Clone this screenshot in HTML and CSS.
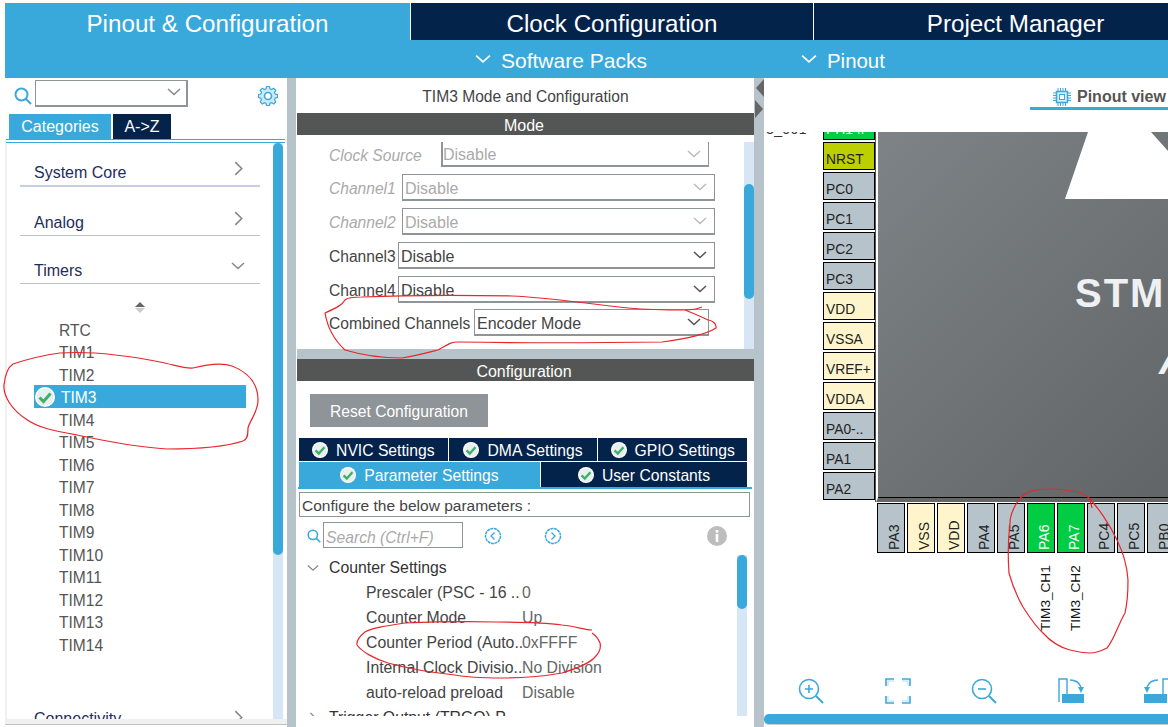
FILE: index.html
```html
<!DOCTYPE html>
<html lang="en">
<head>
  <meta charset="UTF-8" />
  <meta name="viewport" content="width=device-width,initial-scale=1.0" />
  <title>Pinout &amp; Configuration</title>
  <link rel="stylesheet" href="styles.css">
</head>
<body>
  <svg width="0" height="0" class="defs">
    <symbol id="ok" viewBox="0 0 20 20">
      <circle cx="10" cy="10" r="10" fill="#fff"/>
      <circle cx="10" cy="10" r="8.5" fill="#e8efec"/>
      <path d="M4.5 10.5l4 4 7-8" fill="none" stroke="#3fae6e" stroke-width="3"/>
    </symbol>
    <symbol id="down" viewBox="0 0 14 8">
      <path d="M1 1l6 5.5L13 1" fill="none" stroke="currentColor" stroke-width="1.5"/>
    </symbol>
    <symbol id="right" viewBox="0 0 8 14">
      <path d="M1 1l6 6-6 6" fill="none" stroke="currentColor" stroke-width="1.5"/>
    </symbol>
    <symbol id="glass" viewBox="0 0 18 18">
      <circle cx="7.5" cy="7.5" r="6" fill="none" stroke="#3aa8db" stroke-width="2"/>
      <path d="M12 12l5 5" stroke="#3aa8db" stroke-width="2"/>
    </symbol>
  </svg>

  <div class="app">
    <header>
      <nav class="main-tabs">
        <div class="main-tab tab-pinout active">Pinout &amp; Configuration</div>
        <div class="main-tab tab-clock">Clock Configuration</div>
        <div class="main-tab tab-project">Project Manager</div>
      </nav>
      <div class="sub-bar">
        <div class="sub-item sub-packs"><svg class="sub-chev"><use href="#down"/></svg>Software Packs</div>
        <div class="sub-item"><svg class="sub-chev"><use href="#down"/></svg>Pinout</div>
      </div>
    </header>

    <div class="workspace">
      <aside class="left-pane">
        <div class="left-tools">
          <svg class="left-glass"><use href="#glass"/></svg>
          <div class="left-combo"><svg class="combo-chev"><use href="#down"/></svg></div>
          <svg class="gear" viewBox="0 0 20 20">
            <path d="M8.5 1h3l.5 2.4 1.6.7 2.1-1.3 2.1 2.1-1.3 2.1.7 1.6 2.3.5v3l-2.3.5-.7 1.6 1.3 2.1-2.1 2.1-2.1-1.3-1.6.7-.5 2.2h-3L8 17.9l-1.6-.7-2.1 1.3-2.1-2.1 1.3-2.1-.7-1.6L.5 12V9l2.3-.5.7-1.6-1.3-2.1 2.1-2.1 2.1 1.3L8 3.3z" fill="#cfe8f6" stroke="#3aa8db" stroke-width="1.2"/>
            <circle cx="10" cy="10.5" r="3.5" fill="#fff" stroke="#3aa8db" stroke-width="1.6"/>
          </svg>
        </div>
        <div class="left-tabs">
          <div class="left-tab left-tab-on">Categories</div>
          <div class="left-tab left-tab-off">A-&gt;Z</div>
        </div>
        <div class="left-rule"></div>
        <div class="left-body">
          <div class="tree">
            <div class="section section-first">System Core<svg class="sec-right"><use href="#right"/></svg></div>
            <div class="section">Analog<svg class="sec-right"><use href="#right"/></svg></div>
            <div class="section">Timers<svg class="sec-down"><use href="#down"/></svg></div>
            <div class="sorter"><span class="sort-up"></span><span class="sort-down"></span></div>
            <ul class="peripherals">
              <li>RTC</li>
              <li>TIM1</li>
              <li>TIM2</li>
              <li class="picked"><svg class="picked-ok"><use href="#ok"/></svg>TIM3</li>
              <li>TIM4</li>
              <li>TIM5</li>
              <li>TIM6</li>
              <li>TIM7</li>
              <li>TIM8</li>
              <li>TIM9</li>
              <li>TIM10</li>
              <li>TIM11</li>
              <li>TIM12</li>
              <li>TIM13</li>
              <li>TIM14</li>
            </ul>
            <div class="section section-cut">Connectivity<svg class="sec-right"><use href="#right"/></svg></div>
          </div>
          <div class="scroll scroll-left"><div class="thumb thumb-left"></div></div>
        </div>
      </aside>

      <div class="gutter gutter-left"></div>

      <main class="mid-pane">
        <h2 class="mid-title">TIM3 Mode and Configuration</h2>
        <div class="dark-bar">Mode</div>
        <div class="mode-body">
          <div class="mode-form">
            <div class="mode-row row-clock off"><span class="lbl lbl-clock">Clock Source</span><div class="combo">Disable<svg class="combo-chev"><use href="#down"/></svg></div></div>
            <div class="mode-row off"><span class="lbl lbl-ch">Channel1</span><div class="combo">Disable<svg class="combo-chev"><use href="#down"/></svg></div></div>
            <div class="mode-row off"><span class="lbl lbl-ch">Channel2</span><div class="combo">Disable<svg class="combo-chev"><use href="#down"/></svg></div></div>
            <div class="mode-row"><span class="lbl lbl-ch-on">Channel3</span><div class="combo">Disable<svg class="combo-chev"><use href="#down"/></svg></div></div>
            <div class="mode-row"><span class="lbl lbl-ch-on">Channel4</span><div class="combo">Disable<svg class="combo-chev"><use href="#down"/></svg></div></div>
            <div class="mode-row row-combined"><span class="lbl lbl-comb">Combined Channels</span><div class="combo">Encoder Mode<svg class="combo-chev"><use href="#down"/></svg></div></div>
          </div>
          <div class="scroll scroll-mode"><div class="thumb thumb-mode"></div></div>
        </div>
        <div class="mid-split"></div>
        <div class="dark-bar">Configuration</div>
        <div class="config-body">
          <button class="reset-btn">Reset Configuration</button>
          <div class="cfg-tabs cfg-tabs-top">
            <div class="cfg-tab"><svg class="cfg-ok"><use href="#ok"/></svg>NVIC Settings</div>
            <div class="cfg-tab"><svg class="cfg-ok"><use href="#ok"/></svg>DMA Settings</div>
            <div class="cfg-tab"><svg class="cfg-ok"><use href="#ok"/></svg>GPIO Settings</div>
          </div>
          <div class="cfg-tabs cfg-tabs-low">
            <div class="cfg-tab cfg-tab-on"><svg class="cfg-ok"><use href="#ok"/></svg>Parameter Settings</div>
            <div class="cfg-tab cfg-tab-user"><svg class="cfg-ok"><use href="#ok"/></svg>User Constants</div>
          </div>
          <div class="cfg-rule"></div>
          <div class="cfg-note">Configure the below parameters :</div>
          <div class="cfg-search">
            <svg class="cfg-glass"><use href="#glass"/></svg>
            <div class="cfg-input">Search (Ctrl+F)</div>
            <svg class="cfg-nav nav-prev" viewBox="0 0 18 18"><circle cx="9" cy="9" r="7.5" fill="none" stroke="#3aa8db" stroke-width="1.5" stroke-dasharray="3 .6"/><path d="M10.5 5.5L7 9l3.5 3.5" fill="none" stroke="#3aa8db" stroke-width="1.3"/></svg>
            <svg class="cfg-nav nav-next" viewBox="0 0 18 18"><circle cx="9" cy="9" r="7.5" fill="none" stroke="#3aa8db" stroke-width="1.5" stroke-dasharray="3 .6"/><path d="M7.5 5.5L11 9l-3.5 3.5" fill="none" stroke="#3aa8db" stroke-width="1.3"/></svg>
            <svg class="cfg-info" viewBox="0 0 20 20"><circle cx="10" cy="10" r="10" fill="#bdbdbd"/><rect x="8.7" y="4" width="2.6" height="2.6" fill="#fff"/><rect x="8.7" y="8" width="2.6" height="8" fill="#fff"/></svg>
          </div>
          <div class="params">
            <div class="param-tree">
              <div class="param-group"><svg class="group-chev"><use href="#down"/></svg>Counter Settings</div>
              <div class="param"><span class="p-name">Prescaler (PSC - 16 ..</span><span class="p-val">0</span></div>
              <div class="param"><span class="p-name">Counter Mode</span><span class="p-val">Up</span></div>
              <div class="param"><span class="p-name">Counter Period (Auto..</span><span class="p-val">0xFFFF</span></div>
              <div class="param"><span class="p-name">Internal Clock Divisio..</span><span class="p-val">No Division</span></div>
              <div class="param"><span class="p-name">auto-reload preload</span><span class="p-val">Disable</span></div>
              <div class="param-group group-cut"><svg class="group-right"><use href="#right"/></svg>Trigger Output (TRGO) P</div>
            </div>
            <div class="scroll scroll-params"><div class="thumb thumb-params"></div></div>
          </div>
        </div>
      </main>

      <div class="gutter gutter-right">
        <span class="grip grip-left"></span>
        <span class="grip grip-right"></span>
      </div>

      <section class="right-pane">
        <div class="view-tabs">
          <div class="view-tab">
            <svg class="chip-icon" viewBox="0 0 18 18">
              <rect x="3.5" y="3.5" width="11" height="11" fill="#d6ecf8" stroke="#3aa8db" stroke-width="1.5"/>
              <rect x="6.5" y="6.5" width="5" height="5" fill="#fff" stroke="#3aa8db"/>
              <path d="M0 5h3M0 7.5h3M0 10h3M0 12.5h3M15 5h3M15 7.5h3M15 10h3M15 12.5h3M5 0v3M7.5 0v3M10 0v3M12.5 0v3M5 15v3M7.5 15v3M10 15v3M12.5 15v3" stroke="#3aa8db"/>
            </svg>Pinout view
          </div>
        </div>
        <div class="canvas">
          <div class="cut-label">3_001</div>
          <div class="left-pins">
            <div class="pin pin-green pin-top">PH1 ..</div>
            <div class="pin pin-reset">NRST</div>
            <div class="pin">PC0</div>
            <div class="pin">PC1</div>
            <div class="pin">PC2</div>
            <div class="pin">PC3</div>
            <div class="pin pin-power">VDD</div>
            <div class="pin pin-power">VSSA</div>
            <div class="pin pin-power">VREF+</div>
            <div class="pin pin-power">VDDA</div>
            <div class="pin">PA0-..</div>
            <div class="pin">PA1</div>
            <div class="pin">PA2</div>
          </div>
          <div class="chip">
            <svg class="st-logo" viewBox="0 0 104 67"><path d="M23 0H86L104 20V67H0z" fill="#fff"/></svg>
            <div class="chip-name">STM</div>
            <div class="chip-series">A</div>
          </div>
          <div class="bottom-pins">
            <div class="vpin"><span>PA3</span></div>
            <div class="vpin vpin-power"><span>VSS</span></div>
            <div class="vpin vpin-power"><span>VDD</span></div>
            <div class="vpin"><span>PA4</span></div>
            <div class="vpin"><span>PA5</span></div>
            <div class="vpin vpin-green"><span>PA6</span><em>TIM3_CH1</em></div>
            <div class="vpin vpin-green"><span>PA7</span><em>TIM3_CH2</em></div>
            <div class="vpin"><span>PC4</span></div>
            <div class="vpin"><span>PC5</span></div>
            <div class="vpin"><span>PB0</span></div>
          </div>
        </div>
        <div class="view-tools">
          <svg class="tool" viewBox="0 0 26 26"><circle cx="11" cy="11" r="9.5" fill="none" stroke="#3aa8db" stroke-width="1.6"/><path d="M18 18l7 7" stroke="#3aa8db" stroke-width="2"/><path d="M7 11h8M11 7v8" stroke="#3aa8db" stroke-width="1.6"/></svg>
          <svg class="tool" viewBox="0 0 26 26"><path d="M1 8V1h8M17 1h8v7M25 18v7h-8M9 25H1v-7" fill="none" stroke="#3aa8db" stroke-width="1.6"/><path d="M3 8V3h6M17 3h6v5M23 18v5h-6M9 23H3v-5" fill="none" stroke="#cfe8f6" stroke-width="1.5"/></svg>
          <svg class="tool" viewBox="0 0 26 26"><circle cx="11" cy="11" r="9.5" fill="none" stroke="#3aa8db" stroke-width="1.6"/><path d="M18 18l7 7" stroke="#3aa8db" stroke-width="2"/><path d="M7 11h8" stroke="#3aa8db" stroke-width="1.6"/></svg>
          <svg class="tool" viewBox="0 0 26 26"><path d="M1 24V1h8v16" fill="none" stroke="#3aa8db" stroke-width="1.4"/><rect x="4" y="16" width="22" height="9" fill="#3aa8db"/><path d="M12 2c5 0 9 2 11 7" fill="none" stroke="#3aa8db" stroke-width="1.4"/><path d="M20 9h6l-3 6z" fill="#3aa8db"/></svg>
          <svg class="tool" viewBox="0 0 26 26"><path d="M25 24V1h-6v16" fill="none" stroke="#3aa8db" stroke-width="1.4"/><rect x="0" y="16" width="23" height="9" fill="#3aa8db"/><path d="M14 2C9 2 5 4 3 9" fill="none" stroke="#3aa8db" stroke-width="1.4"/><path d="M0 9h6l-3 6z" fill="#3aa8db"/></svg>
        </div>
        <div class="view-scroll"></div>
      </section>
    </div>
  </div>

  <!-- red pen marks drawn on top of the screenshot -->
  <svg class="ink" viewBox="0 0 1168 727">
    <path d="M60 353C90 351 130 356 160 362C175 365 185 369 193 368C205 365 220 362 232 366C250 373 258 385 258 400C258 412 250 420 248 428C248 436 247 440 243 441C225 447 200 449 167 449C135 447 105 441 77 435C55 431 38 428 26 419C12 410 3 396 4 385C5 375 7 368 13 364C28 359 45 355 60 353"/>
    <path d="M702 307C695 310 690 310 685 310C660 310 640 309 628 308C590 304 545 297 512 296C460 295 410 295 362 297C352 297 347 298 345 300C342 305 338 307 325 313C327 325 332 338 345 350C365 356 385 358 402 358C415 356 430 352 438 350C447 345 450 342 458 342C520 343 590 343 662 342C685 339 705 335 716 328C717 324 712 320 708 320C700 316 690 312 685 310"/>
    <path d="M592 630C585 630 575 626 562 625C540 622 520 622 495 622C460 621 430 622 405 623C385 626 372 628 365 632C360 636 356 640 357 645C362 652 375 659 388 663C410 669 435 673 455 675C470 678 485 678 502 678C525 678 545 676 562 673C578 668 590 663 595 657C600 652 601 647 600 643C598 638 595 635 592 633"/>
    <path d="M1092 508C1091 503 1090 499 1088 497C1083 493 1076 491 1070 491C1062 489 1056 489 1050 489C1038 489 1028 491 1023 495C1015 503 1010 515 1010 523C1008 540 1008 560 1009 573C1013 588 1018 598 1023 607C1030 618 1036 627 1043 633C1052 643 1062 648 1070 650C1078 652 1084 653 1090 653C1097 653 1103 650 1107 648C1114 640 1118 625 1125 613C1128 600 1128 590 1128 580C1127 565 1122 550 1117 540C1110 525 1098 507 1088 497"/>
  </svg>
</body>
</html>
```

FILE: styles.css
```css
* { box-sizing: border-box; }
html, body { margin: 0; padding: 0; }
body {
  width: 1168px;
  height: 727px;
  overflow: hidden;
  background: #fff;
  font-family: "Liberation Sans", sans-serif;
  position: relative;
}
.defs { position: absolute; }
.app {
  padding: 3px 0 0 5px;
  height: 727px;
  display: flex;
  flex-direction: column;
}

/* header */
.main-tabs { display: flex; height: 37px; }
.main-tab {
  color: #fff;
  font-size: 24.2px;
  display: flex;
  align-items: center;
  justify-content: center;
  background: #03234b;
  padding-top: 4px;
}
.tab-pinout { width: 405px; background: #39a9dc; }
.tab-clock { width: 402px; margin-left: 1px; }
.tab-project { flex: 1; margin-left: 1px; padding-left: 49px; }
.sub-bar {
  height: 38px;
  background: #39a9dc;
  display: flex;
  color: #fff;
  font-size: 20.4px;
  padding-left: 470px;
}
.sub-item { display: flex; align-items: center; padding-top: 4px; }
.sub-packs { width: 326px; font-size: 21px; }
.sub-chev { width: 16px; height: 10px; margin: -4px 10px 0 0; color: #fff; }

.workspace { flex: 1; display: flex; min-height: 0; }

/* left pane */
.left-pane {
  width: 282px;
  height: 647px;
  display: flex;
  flex-direction: column;
  border-bottom: 1px solid #b6c3ca;
  background: #f0f0f0;
}
.left-tools {
  height: 36px;
  display: flex;
  align-items: flex-start;
  background: #fff;
  padding: 2px 0 0 9px;
}
.left-glass { width: 18px; height: 18px; margin-top: 7px; }
.left-combo {
  width: 153px;
  height: 27px;
  margin-left: 3px;
  border: 1px solid #8f9499;
  border-width: 1px 2px 2px 1px;
  display: flex;
  justify-content: flex-end;
  align-items: center;
  padding-right: 5px;
  color: #888;
}
.left-combo .combo-chev { color: #888; }
.gear { width: 20px; height: 21px; margin: 5px 0 0 70px; }
.left-tabs { height: 25px; display: flex; background: #fff; padding-left: 4px; font-size: 16px; }
.left-tab { display: flex; align-items: center; justify-content: center; color: #fff; }
.left-tab-on { width: 102px; background: #39a9dc; }
.left-tab-off { width: 58px; margin-left: 2px; background: #03234b; }
.left-rule {
  height: 4px;
  background: #fff;
  border-top: 1px solid #39a9dc;
  border-bottom: 1px solid #39a9dc;
  margin-left: 1px;
  margin-right: 2px;
}
.left-body {
  height: 576px;
  display: flex;
  background: #fff;
  margin-left: 2px;
  border-right: 4px solid #fff;
  margin-bottom: 4px;
}
.tree { flex: 1; height: 100%; overflow: hidden; padding-left: 13px; padding-right: 13px; }
.section {
  height: 48.5px;
  border-bottom: 1px solid #b6c3ca;
  display: flex;
  align-items: flex-end;
  justify-content: space-between;
  padding: 0 17px 3px 14px;
  color: #1f2d5c;
  font-size: 16px;
}
.section-first { height: 44px; border-bottom: 2px solid #c5cfe0; }
.section-cut { margin-top: 49px; border: 0; height: 70px; align-items: flex-start; padding-top: 6px; }
.sec-right { width: 9px; height: 15px; color: #888; margin-bottom: 6px; }
.sec-down { width: 14px; height: 8px; color: #888; margin: 0 -2px 10px 0; }
.sorter {
  height: 33.5px;
  display: flex;
  flex-direction: column;
  align-items: center;
  padding-top: 18px;
  gap: 1px;
}
.sort-up { width: 0; height: 0; border: 5px solid transparent; border-top: 0; border-bottom: 5px solid #666; }
.sort-down { width: 0; height: 0; border: 5px solid transparent; border-bottom: 0; border-top: 5px solid #ccc; }
.peripherals { list-style: none; margin: 0; padding: 0; color: #555; font-size: 15.6px; }
.peripherals li { height: 22.5px; line-height: 26.5px; width: 212px; margin-left: 14px; padding-left: 25px; }
.peripherals .picked {
  background: #39a9dc;
  color: #fff;
  display: flex;
  align-items: center;
  padding: 3px 0 0 1px;
  line-height: 18px;
}
.picked-ok { width: 20px; height: 20px; margin: -2px 6px 0 0; flex: none; }

/* scrollbars */
.scroll { width: 10px; background: #d6e6f4; flex: none; }
.thumb { background: #39a9dc; border-radius: 5px; width: 100%; }
.scroll-left { height: 100%; }
.thumb-left { height: 412px; }

.gutter { background: #b6c3ca; flex: none; }
.gutter-left { width: 9px; }
.gutter-right { width: 10px; display: flex; flex-direction: column; padding-top: 1px; gap: 3px; }
.grip { width: 0; height: 0; border: 9px solid transparent; }
.grip-left { border-left: 0; border-right: 8px solid #666; margin-left: 2px; }
.grip-right { border-right: 0; border-left: 8px solid #666; margin-left: 1px; }

/* middle pane */
.mid-pane { width: 458px; padding-left: 1px; background: #fff; display: flex; flex-direction: column; height: 644px; }
.mid-title {
  margin: 0;
  height: 35px;
  font-size: 15.6px;
  font-weight: normal;
  color: #444;
  display: flex;
  align-items: center;
  justify-content: center;
  padding-top: 3px;
}
.dark-bar {
  height: 22px;
  background: #545655;
  color: #fff;
  font-size: 16px;
  text-align: center;
  line-height: 25px;
  padding-right: 3px;
  flex: none;
}
.mode-body { height: 214px; display: flex; padding-top: 7px; flex: none; }
.mode-form { flex: 1; padding-left: 32px; overflow: hidden; }
.mode-row { display: flex; align-items: center; height: 27px; margin-bottom: 7px; font-size: 16px; color: #444; width: 386px; }
.mode-row.off { color: #aaa; }
.mode-row.off .lbl { font-style: italic; }
.row-clock { height: 25px; width: 380px; }
.row-clock .combo { border-top: 0; border-left-width: 2px; padding-left: 0; }
.row-combined { margin-top: -1px; width: 380px; }
.lbl { flex: none; font-size: 15.6px; padding-top: 2px; }
.lbl-clock { width: 112px; }
.lbl-ch { width: 73px; }
.lbl-ch-on { width: 69px; }
.lbl-comb { width: 145px; }
.combo {
  flex: 1;
  height: 100%;
  border: 1px solid #8f9499;
  border-bottom-width: 2px;
  display: flex;
  align-items: center;
  justify-content: space-between;
  padding: 3px 7px 0 2px;
}
.combo-chev { width: 14px; height: 8px; color: #555; flex: none; margin-top: -3px; }
.off .combo-chev { color: #bbb; }
.scroll-mode { height: 207px; }
.thumb-mode { height: 115px; margin-top: 42px; }
.mid-split { height: 10px; background: #b6c3ca; flex: none; }
.config-body { flex: 1; padding-left: 2px; display: flex; flex-direction: column; min-height: 0; }
.reset-btn {
  width: 178px;
  height: 33px;
  margin: 13px 0 0 11px;
  background: #8f9499;
  color: #fff;
  border: 0;
  font-family: inherit;
  font-size: 15.6px;
  padding: 3px 0 0;
  flex: none;
}
.cfg-tabs { display: flex; gap: 1px; width: 448px; color: #fff; font-size: 15.7px; flex: none; }
.cfg-tabs-top { height: 23px; margin-top: 11px; margin-bottom: 1px; }
.cfg-tabs-low { height: 25px; }
.cfg-tab { flex: 1; background: #03234b; display: flex; align-items: center; justify-content: center; padding-top: 3px; }
.cfg-tab-on { flex: none; width: 241px; background: #39a9dc; }
.cfg-ok { width: 16px; height: 16px; margin: -3px 8px 0 0; flex: none; }
.cfg-rule { height: 2px; background: #39a9dc; margin: 0 2px 0 -1px; flex: none; }
.cfg-note {
  height: 25px;
  width: 451px;
  margin-top: 3px;
  border: 1px solid #8f9499;
  font-size: 15.5px;
  color: #444;
  padding: 0 0 0 2px;
  line-height: 25px;
  flex: none;
}
.cfg-search { display: flex; align-items: flex-start; height: 32px; margin-top: 5px; flex: none; padding-left: 8px; }
.cfg-glass { width: 14px; height: 14px; margin-top: 7px; }
.cfg-input {
  width: 140px;
  height: 26px;
  margin-left: 2px;
  border: 1px solid #8f9499;
  font-size: 15.7px;
  font-style: italic;
  color: #aaa;
  padding-left: 2px;
  line-height: 30px;
}
.cfg-nav { width: 18px; height: 18px; margin-top: 5px; }
.nav-prev { margin-left: 21px; }
.nav-next { margin-left: 42px; }
.cfg-info { width: 20px; height: 20px; margin: 4px 0 0 145px; }
.params { display: flex; height: 161px; overflow: hidden; font-size: 15.8px; flex: none; margin-top: 1px; }
.param-tree { flex: 1; padding-left: 10px; }
.param-group { height: 25px; display: flex; align-items: center; color: #333; padding-left: 20px; position: relative; }
.group-chev { position: absolute; left: -2px; top: 9px; width: 12px; height: 8px; color: #888; }
.group-right { position: absolute; left: 0; top: 7px; width: 8px; height: 12px; color: #888; }
.param { height: 25px; display: flex; align-items: center; padding-left: 57px; color: #444; }
.p-name { width: 156px; flex: none; white-space: nowrap; }
.p-val { color: #666; }
.scroll-params { height: 161px; margin-right: 7px; }
.thumb-params { height: 54px; }

/* right pane */
.right-pane { flex: 1; background: #fff; display: flex; flex-direction: column; min-width: 0; }
.view-tabs { height: 54px; padding-left: 266px; flex: none; }
.view-tab {
  height: 32px;
  border-bottom: 3px solid #39a9dc;
  display: flex;
  align-items: center;
  padding-left: 23px;
  padding-top: 9px;
  color: #555;
  font-weight: bold;
  font-size: 16px;
  white-space: nowrap;
  overflow: hidden;
}
.chip-icon { width: 18px; height: 18px; margin-right: 6px; flex: none; }
.canvas { height: 545px; position: relative; overflow: hidden; flex: none; }
.cut-label { position: absolute; left: 2px; top: -11px; font-size: 14px; color: #333; letter-spacing: .4px; }
.left-pins { position: absolute; left: 59px; top: -20px; display: flex; flex-direction: column; gap: 2px; }
.pin {
  width: 53px;
  height: 28px;
  border: 1px solid #000;
  border-right-width: 2px;
  background: #b6c3ca;
  font-size: 13.8px;
  color: #222;
  padding: 8px 0 0 2px;
  line-height: 17px;
  white-space: nowrap;
}
.pin-green { background: #00cc44; color: #fff; }
.pin-reset { background: #bccf00; }
.pin-power { background: #fff5cc; }
.chip {
  position: absolute;
  left: 112px;
  top: 0;
  width: 330px;
  height: 370px;
  border-left: 2px solid #fff;
  border-bottom: 4px solid #666;
  background: linear-gradient(135deg, #7e8387, #5f6365);
  box-shadow: inset 0 -1px 0 #000, -1px 0 0 #555;
  overflow: hidden;
}
.st-logo { position: absolute; left: 187px; top: 0; width: 104px; height: 67px; }
.chip-name { position: absolute; left: 197px; top: 139px; font-size: 40px; font-weight: bold; color: #eef0f2; letter-spacing: 2px; }
.chip-series { position: absolute; left: 281px; top: 206px; font-size: 40px; font-weight: bold; font-style: italic; color: #eef0f2; }
.bottom-pins { position: absolute; left: 113px; top: 371px; display: flex; gap: 2px; }
.vpin {
  width: 28px;
  height: 50px;
  border: 1px solid #000;
  background: #b6c3ca;
  writing-mode: vertical-rl;
  transform: rotate(180deg);
  font-size: 14px;
  color: #222;
  padding: 2px 9px 0 0;
  text-align: left;
  position: relative;
  flex: none;
  line-height: 15px;
}
.vpin-power { background: #fff5cc; }
.vpin-green { background: #00cc44; color: #fff; }
.vpin em {
  position: absolute;
  font-style: normal;
  color: #111;
  font-size: 13.6px;
  top: -79px;
  right: 10px;
  white-space: nowrap;
}
.view-tools { height: 37px; flex: none; display: flex; gap: 60.5px; padding: 1px 0 0 34px; overflow: hidden; }
.tool { width: 26px; height: 26px; flex: none; }
.view-scroll { height: 11px; background: #39a9dc; flex: none; border-radius: 5px 0 0 5px; border-bottom: 1px solid #ccc; }

/* pen marks */
.ink {
  position: absolute;
  left: 0;
  top: 0;
  width: 1168px;
  height: 727px;
  pointer-events: none;
  fill: none;
  stroke: #e8262c;
  stroke-width: 1.2;
}
```
